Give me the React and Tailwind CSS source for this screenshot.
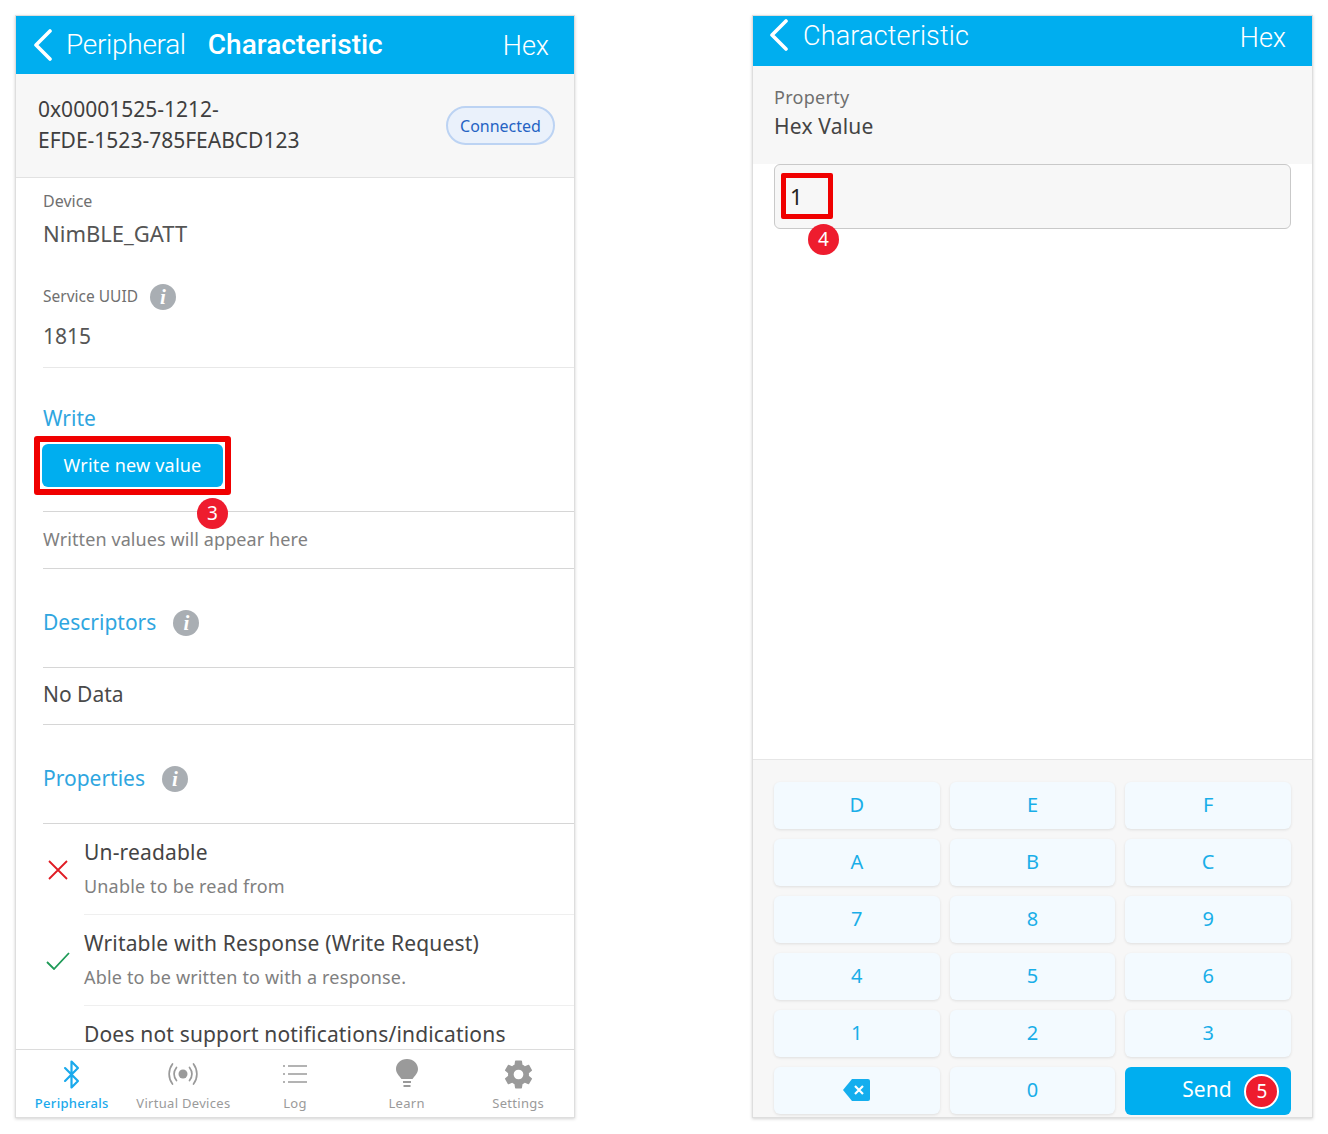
import React from "react";
import { Bluetooth } from "lucide-react";
import { IoSettingsSharp } from "react-icons/io5";

const head = "font-['Roboto',sans-serif]";

function Chevron() {
  return (
    <svg width="20" height="32" viewBox="0 0 20 32" className="shrink-0">
      <path d="M17 2 L3 16 L17 30" fill="none" stroke="#fff" strokeWidth="3.6" strokeLinecap="round" strokeLinejoin="round" />
    </svg>
  );
}

function Badge({ n, className }) {
  return (
    <span className={`absolute w-[31px] h-[31px] rounded-full bg-[#ee1c2e] text-white text-[19px] leading-none grid place-items-center ${className}`}>{n}</span>
  );
}

function Info({ className = "" }) {
  return (
    <span className={`w-[26px] h-[26px] rounded-full bg-[#a9aeb3] text-white grid place-items-center text-[21px] leading-none font-bold italic font-['Liberation_Serif',serif] ${className}`}>i</span>
  );
}

function Section({ title, info, h }) {
  return (
    <div className={`ml-[27px] flex items-center gap-[17px] pt-[10px] ${h} border-b border-[#d6d6d6]`}>
      <span className="text-[21px] text-[#2fa6df]">{title}</span>
      {info && <Info />}
    </div>
  );
}

function Prop({ icon, title, sub, h, last }) {
  return (
    <div className="flex">
      <div className="w-[68px] shrink-0 flex items-center justify-center pl-[16px]">{icon}</div>
      <div className={`flex-1 ${h} ${last ? "" : "border-b border-[#efefef]"}`}>
        <div className="text-[21px] leading-[28px] tracking-[0.17px] text-[#444] pt-[14px]">{title}</div>
        {sub && <div className="text-[18px] leading-[24px] tracking-[0.17px] text-[#808080] mt-[8px]">{sub}</div>}
      </div>
    </div>
  );
}

function Tab({ icon, label, active }) {
  return (
    <div className={`flex-1 flex flex-col items-center ${active ? "text-[#19a9ec]" : "text-[#9a9a9a]"}`}>
      <div className="h-[32px] flex items-center justify-center">{icon}</div>
      <div className={`mt-[5px] text-[13px] leading-[16px] tracking-[0.3px] ${active ? "font-medium" : ""}`}>{label}</div>
    </div>
  );
}

function LeftPhone() {
  return (
    <div className="w-[560px] h-[1103px] shrink-0 flex flex-col overflow-hidden bg-white border border-[#dedede] shadow-[0_1px_3px_rgba(0,0,0,0.18)]">
      <div className={`h-[58px] shrink-0 bg-[#00aeef] text-white flex items-center pl-[17px] pr-[25px] ${head}`}>
        <Chevron />
        <span className="ml-[13px] text-[28px] font-light tracking-[-0.3px]">Peripheral</span>
        <span className="ml-[22px] text-[28px] font-medium">Characteristic</span>
        <span className="ml-auto text-[27px] font-light pt-[3px]">Hex</span>
      </div>
      <div className="h-[104px] shrink-0 bg-[#f7f7f7] border-b border-[#e2e2e2] flex items-center justify-between pl-[22px] pr-[19px]">
        <div className="text-[21px] leading-[31px] text-[#3f3f3f] pb-[2px]">0x00001525-1212-<br />EFDE-1523-785FEABCD123</div>
        <div className="w-[109px] h-[39px] rounded-full bg-[#eaf1fb] border-2 border-[#bcd3f3] text-[#2563c4] text-[16px] grid place-items-center">Connected</div>
      </div>
      <div className="flex-1 min-h-0 overflow-hidden">
        <div className="ml-[27px] h-[190px] border-b border-[#e8e8e8]">
          <div className="pt-[14px] text-[16px] leading-[18px] text-[#707070]">Device</div>
          <div className="mt-[9px] text-[22px] leading-[28px] text-[#555]">NimBLE_GATT</div>
          <div className="mt-[37px] h-[26px] flex items-center gap-[12px] text-[15.5px] text-[#707070]">Service UUID <Info /></div>
          <div className="mt-[13px] text-[21px] leading-[26px] text-[#555]">1815</div>
        </div>
        <div className="ml-[27px] relative h-[144px] border-b border-[#d6d6d6]">
          <div className="pt-[36px] text-[21px] leading-[28px] text-[#2fa6df]">Write</div>
          <div className="relative mt-[12px] -ml-[1px] w-[181px] h-[43px] rounded-md bg-[#00aeef] text-white text-[18px] tracking-[0.2px] grid place-items-center">
            Write new value
            <span className="absolute -inset-[8px] rounded-[3px] border-[6px] border-[#f00000]" />
          </div>
          <Badge n="3" className="left-[154px] top-[130px]" />
        </div>
        <div className="ml-[27px] h-[57px] flex items-center pb-[2px] border-b border-[#d6d6d6] text-[18px] tracking-[0.1px] text-[#808080]">Written values will appear here</div>
        <Section title="Descriptors" info h="h-[99px]" />
        <div className="ml-[27px] h-[57px] flex items-center pb-[2px] border-b border-[#d6d6d6] text-[21px] text-[#4a4a4a]">No Data</div>
        <Section title="Properties" info h="h-[99px]" />
        <Prop
          h="h-[91px]"
          title="Un-readable"
          sub="Unable to be read from"
          icon={
            <svg width="22" height="22" viewBox="0 0 22 22"><path d="M2 2 L20 20 M20 2 L2 20" stroke="#e01b24" strokeWidth="1.8" fill="none" /></svg>
          }
        />
        <Prop
          h="h-[91px]"
          title="Writable with Response (Write Request)"
          sub="Able to be written to with a response."
          icon={
            <svg width="24" height="18" viewBox="0 0 24 18"><path d="M1 10 L8 17 L23 1" stroke="#1e9a57" strokeWidth="1.8" fill="none" /></svg>
          }
        />
        <Prop h="h-[44px]" last title="Does not support notifications/indications" />
      </div>
      <div className="h-[68px] shrink-0 bg-white border-t border-[#dcdcdc] flex pt-[8px]">
        <Tab active label="Peripherals" icon={<Bluetooth size={31} strokeWidth={1.7} />} />
        <Tab label="Virtual Devices" icon={
          <svg width="32" height="26" viewBox="0 0 32 26" fill="none" stroke="currentColor" strokeWidth="1.7" strokeLinecap="round">
            <circle cx="16" cy="13" r="4.5" fill="currentColor" stroke="none" />
            <path d="M9.5 6.5 C6.5 10.5 6.5 15.5 9.5 19.5 M22.5 6.5 C25.5 10.5 25.5 15.5 22.5 19.5 M5.5 3 C1 9 1 17 5.5 23 M26.5 3 C31 9 31 17 26.5 23" />
          </svg>
        } />
        <Tab label="Log" icon={
          <svg width="24" height="20" viewBox="0 0 24 20" fill="none" stroke="currentColor" strokeWidth="1.6">
            <path d="M0 2 H2 M0 10 H2 M0 18 H2 M5 2 H24 M5 10 H24 M5 18 H24" />
          </svg>
        } />
        <Tab label="Learn" icon={
          <svg width="24" height="30" viewBox="0 0 24 30" fill="currentColor">
            <path d="M12 0 C5.5 0 1 4.6 1 10 C1 14.5 4.5 17 6.5 20 H17.5 C19.5 17 23 14.5 23 10 C23 4.6 18.5 0 12 0 Z" />
            <rect x="8" y="22" width="8" height="2" />
            <rect x="8.5" y="26" width="7" height="2" />
          </svg>
        } />
        <Tab label="Settings" icon={<IoSettingsSharp size={31} />} />
      </div>
    </div>
  );
}

const KEYS = ["D", "E", "F", "A", "B", "C", "7", "8", "9", "4", "5", "6", "1", "2", "3"];

function Key({ children }) {
  return (
    <div className="h-[47px] pb-[2px] rounded-md bg-[#f3faff] shadow-[0_1px_3px_rgba(0,0,0,0.1)] text-[#19aee8] text-[20px] grid place-items-center">{children}</div>
  );
}

function RightPhone() {
  return (
    <div className="w-[561px] h-[1103px] shrink-0 flex flex-col overflow-hidden bg-white border border-[#dedede] shadow-[0_1px_3px_rgba(0,0,0,0.18)]">
      <div className={`h-[50px] shrink-0 bg-[#00aeef] text-white flex items-start pl-[16px] pr-[26px] pt-[3px] ${head}`}>
        <Chevron />
        <span className="ml-[14px] text-[27px] font-light leading-[34px] tracking-[0.15px]">Characteristic</span>
        <span className="ml-auto text-[27px] font-light leading-[38px]">Hex</span>
      </div>
      <div className="h-[98px] shrink-0 bg-[#f7f7f7] pl-[21px] pt-[18px]">
        <div className="text-[18px] leading-[26px] tracking-[0.3px] text-[#6f6f6f]">Property</div>
        <div className="mt-[2px] text-[21px] leading-[28px] tracking-[0.2px] text-[#444]">Hex Value</div>
      </div>
      <div className="flex-1 min-h-0 pl-[21px] pr-[21px]">
        <div className="relative h-[65px] bg-[#f7f7f7] border border-[#c9c9c9] rounded-md flex items-center pl-[15px] text-[22px] text-[#222]">
          1
          <span className="absolute left-[6px] top-[8px] w-[52px] h-[46px] rounded-[2px] border-[5px] border-[#f00000]" />
          <Badge n="4" className="left-[33px] top-[59px]" />
        </div>
      </div>
      <div className="h-[358px] shrink-0 bg-[#f7f7f7] border-t border-[#e6e6e6] pl-[21px] pr-[21px] pt-[22px] grid grid-cols-3 gap-x-[10px] gap-y-[10px] content-start">
        {KEYS.map((k) => <Key key={k}>{k}</Key>)}
        <Key>
          <svg width="27" height="22" viewBox="0 0 27 22">
            <path d="M9 0 H25 A2 2 0 0 1 27 2 V20 A2 2 0 0 1 25 22 H9 L0 11 Z" fill="#14aeee" />
            <path d="M12 7 L20 15 M20 7 L12 15" stroke="#fff" strokeWidth="2.2" />
          </svg>
        </Key>
        <Key>0</Key>
        <div className="relative h-[48px] pb-[2px] rounded-md bg-[#00aeef] text-white text-[21px] flex items-center pl-[57px]">
          Send
          <Badge n="5" className="left-[119px] top-[7px] w-[35px] h-[35px] border-2 border-white" />
        </div>
      </div>
    </div>
  );
}

export default function App() {
  return (
    <div className="w-[1328px] h-[1134px] bg-white flex gap-[177px] pl-[15px] pt-[15px] font-['Noto_Sans',sans-serif]">
      <LeftPhone />
      <RightPhone />
    </div>
  );
}
